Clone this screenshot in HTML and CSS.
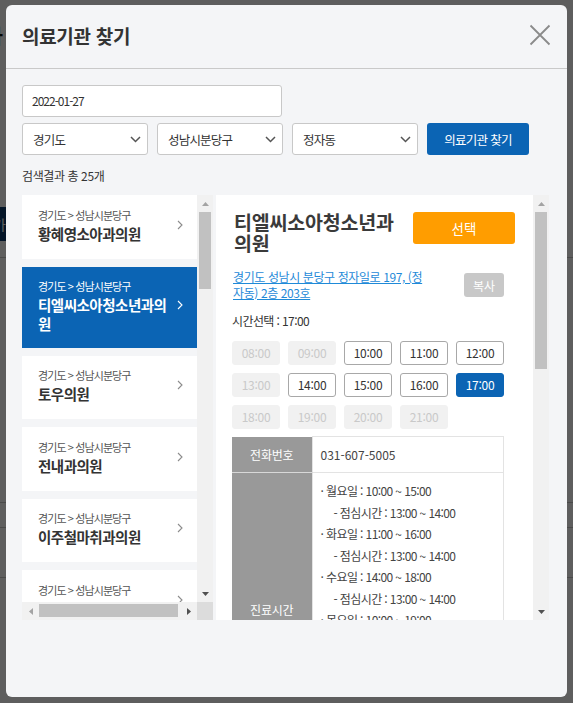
FILE: index.html
```html
<!DOCTYPE html>
<html lang="ko">
<head>
<meta charset="utf-8">
<title>의료기관 찾기</title>
<link rel="stylesheet" href="styles.css">
</head>
<body>
<div class="page">
  <div class="page-title">검사</div>
  <div class="page-tab">가</div>
  <div class="page-table">
    <div class="page-row r1"></div>
    <div class="page-row r2"></div>
    <div class="page-row r3"></div>
    <div class="page-row r4"></div>
  </div>
</div>
<div class="dim"></div>

<div class="modal">
  <header class="modal-head">
    <h1 class="modal-title">의료기관 찾기</h1>
    <button class="close" aria-label="닫기">
      <svg width="22" height="22" viewBox="0 0 22 22"><path d="M1.5 1.5l19 19M20.5 1.5l-19 19" stroke="#8a8a8a" stroke-width="1.8" fill="none"/></svg>
    </button>
  </header>

  <div class="modal-body">
    <div class="date-field">2022-01-27</div>
    <div class="filters">
      <div class="select"><span>경기도</span><svg class="caret" width="11" height="7" viewBox="0 0 11 7"><path d="M1 1l4.5 4.5L10 1" fill="none" stroke="#555" stroke-width="1.5"/></svg></div>
      <div class="select"><span>성남시분당구</span><svg class="caret" width="11" height="7" viewBox="0 0 11 7"><path d="M1 1l4.5 4.5L10 1" fill="none" stroke="#555" stroke-width="1.5"/></svg></div>
      <div class="select"><span>정자동</span><svg class="caret" width="11" height="7" viewBox="0 0 11 7"><path d="M1 1l4.5 4.5L10 1" fill="none" stroke="#555" stroke-width="1.5"/></svg></div>
      <button class="search-btn">의료기관 찾기</button>
    </div>
    <p class="count">검색결과 총 25개</p>

    <div class="panels">
      <div class="list-panel">
        <div class="list">
          <div class="item">
            <div class="item-text"><div class="crumb">경기도 &gt; 성남시분당구</div><div class="name">황혜영소아과의원</div></div>
            <svg class="chev" width="6" height="10" viewBox="0 0 6 10"><path d="M1 1l4 4-4 4" fill="none" stroke="currentColor" stroke-width="1.1"/></svg>
          </div>
          <div class="item active">
            <div class="item-text"><div class="crumb">경기도 &gt; 성남시분당구</div><div class="name">티엘씨소아청소년과의<br>원</div></div>
            <svg class="chev" width="6" height="10" viewBox="0 0 6 10"><path d="M1 1l4 4-4 4" fill="none" stroke="currentColor" stroke-width="1.1"/></svg>
          </div>
          <div class="item">
            <div class="item-text"><div class="crumb">경기도 &gt; 성남시분당구</div><div class="name">토우의원</div></div>
            <svg class="chev" width="6" height="10" viewBox="0 0 6 10"><path d="M1 1l4 4-4 4" fill="none" stroke="currentColor" stroke-width="1.1"/></svg>
          </div>
          <div class="item">
            <div class="item-text"><div class="crumb">경기도 &gt; 성남시분당구</div><div class="name">전내과의원</div></div>
            <svg class="chev" width="6" height="10" viewBox="0 0 6 10"><path d="M1 1l4 4-4 4" fill="none" stroke="currentColor" stroke-width="1.1"/></svg>
          </div>
          <div class="item">
            <div class="item-text"><div class="crumb">경기도 &gt; 성남시분당구</div><div class="name">이주철마취과의원</div></div>
            <svg class="chev" width="6" height="10" viewBox="0 0 6 10"><path d="M1 1l4 4-4 4" fill="none" stroke="currentColor" stroke-width="1.1"/></svg>
          </div>
          <div class="item">
            <div class="item-text"><div class="crumb">경기도 &gt; 성남시분당구</div><div class="name">정자연세의원</div></div>
            <svg class="chev" width="6" height="10" viewBox="0 0 6 10"><path d="M1 1l4 4-4 4" fill="none" stroke="currentColor" stroke-width="1.1"/></svg>
          </div>
        </div>
        <div class="vscroll">
          <div class="arrow"><svg width="7" height="4" viewBox="0 0 7 4"><path d="M0 4L3.5 0 7 4z" fill="#a3a3a3"/></svg></div>
          <div class="track"><div class="thumb list-thumb"></div></div>
          <div class="arrow"><svg width="7" height="4" viewBox="0 0 7 4"><path d="M0 0h7L3.5 4z" fill="#505050"/></svg></div>
        </div>
        <div class="hscroll">
          <div class="harrow"><svg width="4" height="7" viewBox="0 0 4 7"><path d="M4 0v7L0 3.5z" fill="#a3a3a3"/></svg></div>
          <div class="htrack"><div class="hthumb"></div></div>
          <div class="harrow"><svg width="4" height="7" viewBox="0 0 4 7"><path d="M0 0v7l4-3.5z" fill="#505050"/></svg></div>
        </div>
        <div class="corner"></div>
      </div>

      <div class="detail-panel">
        <div class="detail">
          <div class="detail-head">
            <h2 class="detail-title">티엘씨소아청소년과<br>의원</h2>
            <button class="pick-btn">선택</button>
          </div>
          <div class="inner">
            <div class="addr-row">
              <a class="addr" href="#">경기도 성남시 분당구 정자일로 197, (정<br>자동) 2층 203호</a>
              <button class="copy-btn">복사</button>
            </div>
            <p class="time-label">시간선택 : 17:00</p>
            <div class="slots">
              <span class="slot off">08:00</span>
              <span class="slot off">09:00</span>
              <span class="slot">10:00</span>
              <span class="slot">11:00</span>
              <span class="slot">12:00</span>
              <span class="slot off">13:00</span>
              <span class="slot">14:00</span>
              <span class="slot">15:00</span>
              <span class="slot">16:00</span>
              <span class="slot on">17:00</span>
              <span class="slot off">18:00</span>
              <span class="slot off">19:00</span>
              <span class="slot off">20:00</span>
              <span class="slot off">21:00</span>
            </div>
            <table class="info">
              <tr><th>전화번호</th><td class="phone">031-607-5005</td></tr>
              <tr><th>진료시간</th>
                <td class="hours">
                  <div>· 월요일 : 10:00 ~ 15:00</div>
                  <div class="sub">- 점심시간 : 13:00 ~ 14:00</div>
                  <div>· 화요일 : 11:00 ~ 16:00</div>
                  <div class="sub">- 점심시간 : 13:00 ~ 14:00</div>
                  <div>· 수요일 : 14:00 ~ 18:00</div>
                  <div class="sub">- 점심시간 : 13:00 ~ 14:00</div>
                  <div>· 목요일 : 10:00 ~ 19:00</div>
                  <div class="sub">- 점심시간 : 13:00 ~ 14:00</div>
                  <div>· 금요일 : 10:00 ~ 19:00</div>
                  <div class="sub">- 점심시간 : 13:00 ~ 14:00</div>
                  <div>· 토요일 : 09:00 ~ 13:00</div>
                  <div class="sub">- 점심시간 : 없음</div>
                </td>
              </tr>
            </table>
          </div>
        </div>
        <div class="vscroll">
          <div class="arrow"><svg width="7" height="4" viewBox="0 0 7 4"><path d="M0 4L3.5 0 7 4z" fill="#a3a3a3"/></svg></div>
          <div class="track"><div class="thumb detail-thumb"></div></div>
          <div class="arrow"><svg width="7" height="4" viewBox="0 0 7 4"><path d="M0 0h7L3.5 4z" fill="#505050"/></svg></div>
        </div>
      </div>
    </div>
  </div>
</div>
</body>
</html>
```

FILE: styles.css
```css
* { box-sizing: border-box; }
html, body { margin: 0; height: 100%; }
body {
  position: relative;
  overflow: hidden;
  background: #fff;
  font-family: "Noto Sans CJK KR", "Noto Sans", sans-serif;
  color: #333;
}

/* page behind the dialog */
.page { padding-top: 24px; }
.page-title {
  margin-left: -34px;
  font-size: 20px;
  line-height: 24px;
  font-weight: 700;
  color: #111;
}
.page-tab {
  margin-top: 159px;
  margin-left: -30px;
  width: 36px;
  height: 34px;
  background: #0c3b6e;
  color: #fff;
  font-size: 14px;
  line-height: 34px;
  text-align: right;
}
.page-table { margin-top: 16px; }
.page-row { border-top: 1px solid #c8c8c8; }
.page-row.r1 { height: 245px; }
.page-row.r2 { height: 25px; }
.page-row.r3 { height: 50px; }
.page-row.r4 { height: 60px; }

.dim {
  position: absolute;
  inset: 0;
  background: rgba(0, 0, 0, 0.63);
}

/* dialog */
.modal {
  position: absolute;
  left: 6px;
  top: 5px;
  width: 561px;
  height: 692px;
  background: #f4f5f7;
  border-radius: 6px;
  overflow: hidden;
}
.modal-head {
  height: 64px;
  border-bottom: 1px solid #c9c9c9;
  display: flex;
  align-items: center;
  justify-content: space-between;
  padding: 0 16px 3px 16px;
}
.modal-title {
  margin: 0;
  font-size: 19px;
  font-weight: 700;
  letter-spacing: -0.3px;
  color: #333;
}
.close {
  border: 0;
  background: none;
  padding: 0;
  width: 22px;
  height: 22px;
  display: flex;
}

.modal-body { padding: 16px 18px 0 16px; }

.date-field {
  width: 260px;
  height: 32px;
  border: 1px solid #c8c8c8;
  border-radius: 3px;
  background: #fff;
  padding-left: 9px;
  font-size: 12px;
  line-height: 30px;
  letter-spacing: -1px;
  color: #333;
}

.filters {
  margin-top: 6px;
  display: flex;
  gap: 9px;
}
.select {
  width: 126px;
  height: 32px;
  border: 1px solid #c8c8c8;
  border-radius: 3px;
  background: #fff;
  display: flex;
  align-items: center;
  justify-content: space-between;
  padding: 0 6px 0 10px;
  font-size: 12.5px;
  letter-spacing: -0.8px;
  color: #333;
}
.search-btn {
  width: 102px;
  height: 32px;
  border: 0;
  border-radius: 3px;
  background: #0b64b4;
  color: #fff;
  font-family: inherit;
  font-size: 12.5px;
  letter-spacing: -0.7px;
  padding: 0;
}

.count {
  margin: 12px 0 11px;
  font-size: 12px;
  line-height: 17px;
  letter-spacing: -0.4px;
  color: #333;
}

.panels {
  display: flex;
  gap: 3px;
  height: 425px;
}

/* list panel */
.list-panel {
  width: 191px;
  display: grid;
  grid-template-columns: 175px 16px;
  grid-template-rows: 407px 18px;
}
.list {
  overflow: hidden;
  min-height: 0;
}
.item {
  display: flex;
  align-items: center;
  min-height: 63.5px;
  background: #fff;
  margin-bottom: 8px;
  padding: 11px 14px 15px 16px;
  color: #333;
}
.item-text { flex: 1; }
.crumb {
  font-size: 11px;
  line-height: 17px;
  letter-spacing: -0.9px;
  color: #555;
}
.name {
  font-size: 14.5px;
  line-height: 19px;
  font-weight: 700;
  letter-spacing: -0.5px;
  color: #333;
  white-space: nowrap;
}
.chev { color: #8c8c8c; flex: none; }
.item.active { background: #0b64b4; }
.item.active .crumb,
.item.active .name,
.item.active .chev { color: #fff; }

/* fake scrollbars */
.vscroll {
  width: 16px;
  background: #f1f1f1;
  display: flex;
  flex-direction: column;
}
.arrow {
  height: 17px;
  flex: none;
  display: flex;
  align-items: center;
  justify-content: center;
}
.track { flex: 1; }
.thumb {
  margin: 0 2px;
  background: #c1c1c1;
}
.list-thumb { height: 77px; }
.detail-thumb { height: 157px; }

.hscroll {
  position: relative;
  z-index: 1;
  display: flex;
  background: #f1f1f1;
}
.harrow {
  width: 17px;
  flex: none;
  display: flex;
  align-items: center;
  justify-content: center;
}
.htrack { flex: 1; padding: 2px 0; }
.hthumb {
  width: 139px;
  height: 13px;
  background: #c1c1c1;
}
.corner { background: #dcdcdc; }

/* detail panel */
.detail-panel {
  width: 333px;
  display: flex;
}
.detail {
  flex: 1;
  background: #fff;
  overflow: hidden;
  padding: 16px 18px 0 16px;
}
.detail-head {
  display: flex;
  justify-content: space-between;
  align-items: flex-start;
}
.detail-title {
  margin: 0;
  font-size: 19.5px;
  line-height: 21px;
  font-weight: 700;
  letter-spacing: -0.2px;
  color: #3a3a3a;
  padding-left: 2px;
}
.pick-btn {
  margin-top: 1px;
  width: 102px;
  height: 32px;
  border: 0;
  border-radius: 3px;
  background: #ff9d00;
  color: #fff;
  font-family: inherit;
  font-size: 13.5px;
  padding: 0;
}
.inner { width: 272px; }
.addr-row {
  margin-top: 16px;
  display: flex;
  align-items: center;
  justify-content: space-between;
}
.addr {
  font-size: 12px;
  line-height: 16px;
  letter-spacing: -0.4px;
  color: #1f8ad8;
  text-decoration: underline;
  padding-left: 1px;
}
.copy-btn {
  width: 40px;
  height: 24px;
  border: 0;
  border-radius: 3px;
  background: #c8c8c8;
  color: #fff;
  font-family: inherit;
  font-size: 12px;
  padding: 0;
}
.time-label {
  margin: 12px 0 0;
  font-size: 12px;
  line-height: 16px;
  letter-spacing: -0.6px;
  color: #333;
}
.slots {
  margin-top: 12px;
  display: grid;
  grid-template-columns: repeat(5, 48px);
  grid-auto-rows: 24px;
  gap: 8px;
}
.slot {
  border: 1px solid #a8a8a8;
  border-radius: 3px;
  font-size: 12px;
  line-height: 22px;
  text-align: center;
  letter-spacing: -0.3px;
  color: #333;
  background: #fff;
}
.slot.off {
  border-color: #f1f1f1;
  background: #f1f1f1;
  color: #c9c9c9;
}
.slot.on {
  border-color: #0b64b4;
  background: #0b64b4;
  color: #fff;
}

.info {
  margin-top: 7px;
  width: 272px;
  border-collapse: collapse;
  font-size: 12px;
}
.info th {
  width: 80px;
  background: #999;
  color: #fff;
  font-weight: 400;
  letter-spacing: -0.2px;
  border-bottom: 1px solid #d8d8d8;
  vertical-align: middle;
}
.info td {
  border: 1px solid #e3e3e3;
  color: #444;
  padding: 0 8px;
}
.info td.phone {
  height: 36px;
  letter-spacing: 0;
}
.info td.hours {
  padding: 7px 8px;
  line-height: 21.5px;
  letter-spacing: -0.6px;
}
.hours .sub { padding-left: 13px; }
```
